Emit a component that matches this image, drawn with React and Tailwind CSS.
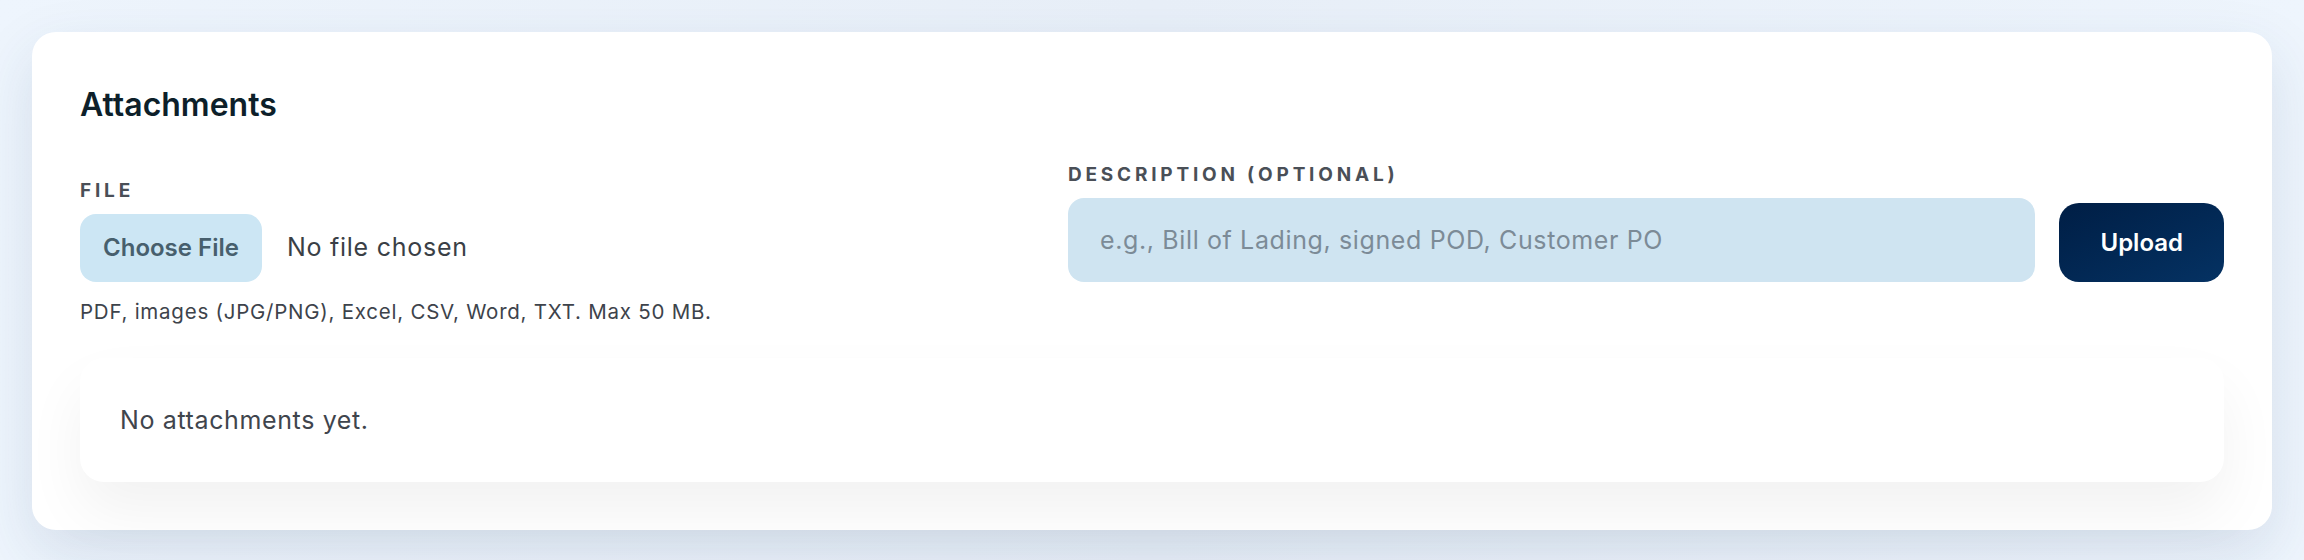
import React from "react";

export default function App() {
  return (
    <div
      className="min-h-[560px] w-full bg-gradient-to-r from-[#eef5fd] via-[#e8eff8] to-[#eef5fd] p-8"
      style={{ fontFamily: "Inter, 'Noto Sans', sans-serif" }}
    >
      <div className="rounded-3xl bg-white p-12 shadow-[0_22px_60px_rgba(40,70,110,0.13)]">
        <h2 className="mt-[1px] text-[32px] font-semibold leading-[48px] text-[#0d1f2a]">
          Attachments
        </h2>

        <div className="mt-8 flex items-end gap-6">
          <div className="w-[964px]">
            <div className="mb-[9px] text-[19px] font-bold uppercase leading-[28px] tracking-[0.2em] text-[#4a4f57]">
              File
            </div>
            <div className="flex items-center gap-[25px]">
              <button
                type="button"
                className="h-[68px] rounded-2xl bg-[#cce6f4] px-[23px] text-[24px] font-semibold text-[#475f6d]"
              >
                Choose File
              </button>
              <span className="text-[25px] tracking-[0.03em] text-[#3a3f46]">No file chosen</span>
            </div>
          </div>

          <div className="flex-1">
            <div className="mb-[9px] text-[19px] font-bold uppercase leading-[28px] tracking-[0.2em] text-[#4a4f57]">
              Description (optional)
            </div>
            <div className="flex items-end gap-6">
              <input
                type="text"
                placeholder="e.g., Bill of Lading, signed POD, Customer PO"
                className="h-[84px] min-w-0 flex-1 rounded-2xl bg-[#cfe4f1] px-8 text-[25px] tracking-[0.025em] text-[#2b3138] outline-none placeholder:text-[#7c8b97]"
              />
              <button
                type="button"
                className="h-[79px] rounded-[20px] bg-gradient-to-br from-[#001e45] to-[#053263] px-[41px] text-[24px] font-semibold text-white"
              >
                Upload
              </button>
            </div>
          </div>
        </div>

        <p className="mt-4 text-[20.5px] leading-[28px] tracking-[0.037em] text-[#3d434b]">
          PDF, images (JPG/PNG), Excel, CSV, Word, TXT. Max 50 MB.
        </p>

        <div className="mt-8 rounded-3xl bg-white px-10 py-11 shadow-[0_30px_60px_rgba(0,0,0,0.055)]">
          <p className="text-[25px] leading-[36px] tracking-[0.025em] text-[#3f454d]">No attachments yet.</p>
        </div>
      </div>
    </div>
  );
}
